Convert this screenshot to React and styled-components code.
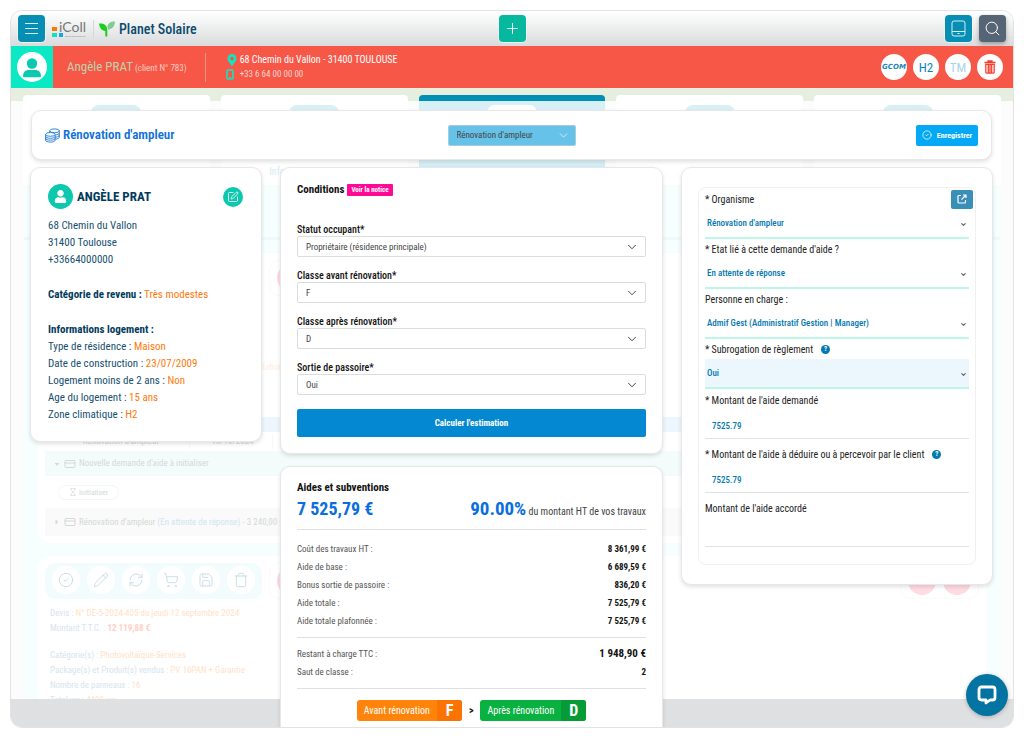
import React from "react";
import styled, { createGlobalStyle, css } from "styled-components";
import {
  CircleCheck,
  Pencil,
  RefreshCw,
  ShoppingCart,
  Save,
  Trash,
  Search,
  Plus,
  ChevronDown,
  SquarePen,
  CreditCard,
  Hourglass,
} from "lucide-react";
import { FaUser, FaMapMarkerAlt, FaCaretDown, FaCaretRight } from "react-icons/fa";

const GlobalStyle = createGlobalStyle`
  *, *::before, *::after { box-sizing: border-box; }
  body { margin: 0; background: #fff; }
  body, button, input, select {
    font-family: "Roboto Condensed", "Liberation Sans Narrow", Roboto, sans-serif;
  }
  button, input, select { margin: 0; }
  h1, h2, h3, p { margin: 0; }
`;

/* ---------- shell ---------- */

const Frame = styled.div`
  position: relative;
  display: flex;
  flex-direction: column;
  height: calc(100vh - 20px);
  margin: 10px;
  border: 1px solid #e2e2e2;
  border-radius: 12px;
  overflow: hidden;
`;

const TopBar = styled.header`
  display: grid;
  grid-template-columns: 1fr auto 1fr;
  align-items: center;
  flex: none;
  height: 35px;
  padding: 0 7px;
  background: linear-gradient(#fff, #f2f3f3 35%, #d9dadb);
`;

const BarGroup = styled.div`
  display: flex;
  align-items: center;
  justify-content: ${(p) => (p.$end ? "flex-end" : "flex-start")};
  gap: 7px;
`;

const SquareButton = styled.button`
  display: grid;
  place-items: center;
  width: 27px;
  height: 27px;
  padding: 0;
  border: 0;
  border-radius: 4px;
  color: #fff;
  background: ${(p) => p.$bg};
  box-shadow: ${(p) => (p.$raised ? "0 2px 4px rgba(0,0,0,.3)" : "0 0 0 1px rgba(255,255,255,.5)")};
`;

const Brand = styled.div`
  display: flex;
  align-items: center;
  gap: 4px;
  padding-left: 5px;
  border-left: 1px solid #d5d8da;
  height: 18px;
  color: #0b4a6c;
  font-size: 14px;
  line-height: 20px;
  font-weight: 500;
  white-space: nowrap;
`;

const LogoText = styled.span`
  align-self: start;
  color: #777;
  font-family: Lato, sans-serif;
  font-size: 14px;
  line-height: 15px;
`;

const Logo = styled.div`
  display: grid;
  grid-template-columns: 7px auto;
  align-items: center;
  height: 20px;
`;

/* ---------- client bar ---------- */

const ClientBar = styled.section`
  display: flex;
  align-items: center;
  flex: none;
  height: 42px;
  padding-right: 10px;
  background: #f65747;
  color: #fff;
`;

const AvatarTile = styled.div`
  display: grid;
  place-items: center;
  width: 42px;
  height: 42px;
  margin-right: 14px;
  background: #0be8c4;
`;

const ClientName = styled.div`
  padding-right: 18px;
  border-right: 1px solid #e59a80;
  color: #f5cfc2;
  font-size: 9px;
  line-height: 28px;
  white-space: nowrap;

  strong {
    color: #bfd2ae;
    font-size: 13px;
    font-weight: 400;
  }
`;

const Contact = styled.address`
  display: grid;
  grid-template-columns: 10px auto;
  column-gap: 4px;
  align-items: center;
  margin-left: 20px;
  font-style: normal;
  font-size: 10px;
  line-height: 15px;
  white-space: nowrap;

  small { font-size: 9px; color: #fbd5cf; }
`;

const RoundBadge = styled.button`
  display: grid;
  place-items: center;
  width: 26px;
  height: 26px;
  padding: 0;
  border: 0;
  border-radius: 50%;
  background: #fff;
  color: ${(p) => p.$color};
  font-size: 13px;
`;

const BadgeRow = styled.div`
  display: flex;
  gap: 6px;
  margin-left: auto;
`;

/* ---------- faded page behind the dialog ---------- */

const Stage = styled.main`
  display: grid;
  grid-template: minmax(0, 1fr) / minmax(0, 1fr);
  flex: 1;
  min-height: 0;
`;

const layer = css`
  grid-area: 1 / 1;
  min-height: 0;
  overflow: hidden;
`;

const Backdrop = styled.div`
  ${layer}
  display: flex;
  flex-direction: column;
  background: #fcfcfc;
`;

const BackdropPage = styled.div`
  flex: 1;
  min-height: 0;
  overflow: hidden;
`;

const BackdropFooter = styled.div`
  flex: none;
  height: 28px;
  background: #dfe0e2;
`;

const Steps = styled.div`
  display: grid;
  grid-template-columns: repeat(5, 1fr);
  gap: 11px;
  padding: 7px 12px 0;
  background: linear-gradient(#e6eee0 13px, transparent 13px);
`;

const Step = styled.div`
  display: flex;
  flex-direction: column;
  align-items: center;
  height: 90px;
  padding-top: ${(p) => (p.$active ? 4 : 10)}px;
  border-top: ${(p) => (p.$active ? "6px solid #0090b5" : "0")};
  border-radius: 4px 4px 0 0;
  background: ${(p) => (p.$active ? "linear-gradient(#d8f0f5 60px, #d0eaf6 72px)" : "#fff")};
  color: #d5ebf3;
  font-size: 10px;
  white-space: nowrap;
`;

const StepPill = styled.span`
  width: 50px;
  height: 20px;
  margin-bottom: 41px;
  border-radius: 8px;
  background: ${(p) => (p.$active ? "#fff" : "#d8f0f4")};
`;

const Sheet = styled.div`
  display: flex;
  flex-direction: column;
  gap: 13px;
  margin: 0 13px;
  padding: 0 14px;
  background: #f7fefe;
`;

const SheetTop = styled.div`
  height: 55px;
  margin: 0 -14px;
  border-bottom: 3px solid #eef9fb;
`;

const GhostCard = styled.section`
  height: ${(p) => p.$height}px;
  padding: 7px;
  border-radius: 12px;
  background: #fff;
  color: #d6e5ee;
  font-size: 9px;
  line-height: 15px;
`;

const GhostBar = styled.div`
  display: flex;
  gap: 7px;
`;

const GhostTools = styled.div`
  display: flex;
  gap: 7px;
  padding: 3px 7px;
  border-radius: 10px;
  background: ${(p) => (p.$plain ? "#fff" : "#f2fcfc")};
  border: ${(p) => (p.$plain ? "1px solid #fafafa" : "0")};
  margin-left: ${(p) => (p.$push ? "auto" : "0")};
`;

const GhostIcon = styled.span`
  display: grid;
  place-items: center;
  width: 28px;
  height: 28px;
  border-radius: 50%;
  background: ${(p) => (p.$pink ? "#ffdbe2" : "#fff")};
  color: #cbdee7;
`;

const GhostText = styled.div`
  padding: ${(p) => p.$top || 0}px 5px 0;
  white-space: nowrap;

  em { color: #ffe2c8; font-style: normal; }
  b { color: #ffcfc4; }
`;

const GhostAside = styled.div`
  height: 121px;
  padding: 64px 0 0 198px;
  color: #ffeee0;
`;

const GhostHead = styled.div`
  height: 15px;
  background: #ecf6fc;
`;

const GhostRow = styled.div`
  display: flex;
  align-items: center;
  gap: 3px;
  height: ${(p) => p.$height}px;
  padding-left: ${(p) => p.$indent || 8}px;
  background: ${(p) => p.$bg || "#fff"};
  color: #d3d8d8;
  white-space: nowrap;

  em { color: #cfe5f0; font-style: normal; }
`;

const GhostCell = styled.span`
  width: ${(p) => p.$width}px;
  text-align: center;
  border-right: 1px solid #f4f8f8;
`;

const GhostPill = styled.span`
  display: flex;
  align-items: center;
  gap: 2px;
  padding: 0 10px;
  border: 1px solid #f3f5f5;
  border-radius: 8px;
  font-size: 8px;
  line-height: 13px;
`;

/* ---------- dialog ---------- */

const Dialog = styled.div`
  ${layer}
  position: relative;
  display: flex;
  flex-direction: column;
  gap: 7px;
  padding: 22px 20px 0 19px;
`;

const Card = styled.section`
  padding: ${(p) => p.$pad};
  border: 1px solid #e6e7e8;
  border-radius: 10px;
  background: #fff;
  box-shadow: 0 2px 4px rgba(0, 0, 0, 0.12);
`;

const TitleCard = styled(Card)`
  display: grid;
  grid-template-columns: 1fr 128px 1fr;
  align-items: center;
  flex: none;
  height: 50px;
  margin: 0 1px;
  padding: 0 13px;
`;

const Title = styled.h1`
  display: flex;
  align-items: center;
  gap: 3px;
  color: #1070dc;
  font-size: 13px;
  line-height: 18px;
  font-weight: 600;
`;

const SaveButton = styled.button`
  display: flex;
  align-items: center;
  justify-content: center;
  justify-self: end;
  gap: 5px;
  width: 62px;
  height: 21px;
  padding: 0;
  border: 0;
  border-radius: 2px;
  background: #03a9f4;
  color: #fff;
  font-size: 8px;
  font-weight: 700;
`;

const Columns = styled.div`
  display: grid;
  grid-template-columns: 232fr 383fr 312fr;
  gap: 18px;
  align-items: start;
`;

const Stack = styled.div`
  display: flex;
  flex-direction: column;
  gap: 12px;
`;

const SelectBox = styled.div`
  display: grid;
  align-items: center;

  > * { grid-area: 1 / 1; }
  > svg { justify-self: end; margin-right: ${(p) => p.$inset}px; pointer-events: none; color: ${(p) => p.$icon || "#444"}; }
`;

const BoxedSelect = styled.select`
  appearance: none;
  width: 100%;
  height: 21px;
  padding: 0 8px;
  border: 1px solid ${(p) => (p.$tinted ? "#a5cbdd" : "#dcdcdc")};
  border-radius: 2px;
  background: ${(p) => (p.$tinted ? "#66c2e9" : "#fff")};
  color: #444;
  font-size: 9px;
`;

/* left card */

const PersonHead = styled.div`
  display: flex;
  align-items: center;
  gap: 4px;
  height: 25px;
  margin-bottom: 8px;
  color: #023a5c;

  h2 { font-size: 13px; line-height: 18px; font-weight: 700; }
`;

const TealCircle = styled.span`
  display: grid;
  place-items: center;
  width: 25px;
  height: 25px;
  border-radius: 50%;
  background: #0bc8ae;
  color: #fff;
`;

const EditButton = styled.button`
  display: grid;
  place-items: center;
  width: 20px;
  height: 20px;
  margin-left: auto;
  padding: 0;
  border: 0;
  border-radius: 50%;
  background: #0bc8ae;
  color: #fff;
`;

const InfoGroup = styled.div`
  margin-top: ${(p) => (p.$spaced ? 18 : 0)}px;
  color: #17506f;
  font-size: 11px;
  line-height: 17px;
  white-space: nowrap;

  b { color: #023a5c; }
  em { color: #ff7a0c; font-style: normal; }
`;

/* middle cards */

const SectionTitle = styled.h2`
  display: flex;
  align-items: center;
  gap: 3px;
  color: #111;
  font-size: 11px;
  line-height: 16px;
  font-weight: 700;
`;

const NoticeLink = styled.a`
  padding: 0 4px;
  border-radius: 1px;
  background: #ff0a96;
  color: #fff;
  font-size: 7px;
  line-height: 12px;
  text-decoration: none;
`;

const ConditionForm = styled.form`
  display: flex;
  flex-direction: column;
  gap: 12px;
  padding-top: 25px;
`;

const ConditionField = styled.div`
  label {
    display: block;
    color: #111;
    font-size: 10px;
    line-height: 13px;
    font-weight: 500;
  }
`;

const PrimaryButton = styled.button`
  height: 28px;
  margin-top: 2px;
  border: 0;
  border-radius: 2px;
  background: #0388d1;
  color: #fff;
  font-size: 9px;
  font-weight: 700;
`;

const Headline = styled.div`
  display: flex;
  align-items: baseline;
  justify-content: space-between;
  height: 34px;
  border-bottom: 1px solid #e0e0e0;
  color: #444;
  font-size: 10px;
  line-height: 26px;

  strong { color: #0b6ee0; font-size: 19px; }
  > strong { font-size: 18px; }
`;

const Figures = styled.table`
  width: 100%;
  border-collapse: collapse;
  color: #555;
  font-size: 9px;
  line-height: 18px;

  th, td { padding: 0; text-align: left; font-weight: 400; }
  td { color: #111; text-align: right; font-weight: 700; }
`;

const FigureBlock = styled.div`
  padding: ${(p) => p.$top}px 0 7px;
  border-bottom: 1px solid #e0e0e0;
`;

const Larger = styled.span`
  font-size: 11px;
`;

const GradeRow = styled.div`
  display: flex;
  align-items: center;
  justify-content: center;
  gap: 7px;
  padding: 11px 0 30px;
  color: #111;
  font-size: 10px;
  font-weight: 700;
`;

const Grade = styled.span`
  display: flex;
  height: 21px;
  border-radius: 3px;
  overflow: hidden;
  background: ${(p) => p.$bg};
  color: #fff;
  font-size: 10px;
  line-height: 21px;
  font-weight: 400;

  > span { padding: 0 7px; }
  > b { width: 25px; background: ${(p) => p.$dark}; font-size: 16px; text-align: center; }
`;

/* right card */

const AidForm = styled.form`
  padding: 1px 6px 13px;
  border: 1px solid #f0f0f0;
  border-radius: 8px;
`;

const AidLabel = styled.div`
  display: flex;
  align-items: center;
  justify-content: space-between;
  height: ${(p) => p.$height}px;
  color: #222;
  font-size: 10px;
  white-space: nowrap;
`;

const LabelGroup = styled.span`
  display: flex;
  align-items: center;
  gap: 8px;
`;

const Help = styled.button`
  width: 9px;
  height: 9px;
  padding: 0;
  border: 0;
  border-radius: 50%;
  background: #0478b0;
  color: #fff;
  font-size: 7px;
  line-height: 9px;
  font-weight: 700;
`;

const OpenButton = styled.button`
  display: grid;
  place-items: center;
  width: 22px;
  height: 19px;
  margin-right: -4px;
  padding: 0;
  border: 0;
  border-radius: 2px;
  background: #3a8fb9;
  color: #fff;
`;

const LineSelect = styled.select`
  appearance: none;
  width: 100%;
  height: 30px;
  padding: 0 2px;
  border: 0;
  border-bottom: 2px solid #bdf5e6;
  border-radius: 0;
  background: ${(p) => (p.$filled ? "#ebf7fc" : "#fff")};
  color: #0478b0;
  font-size: 9px;
  font-weight: 500;
`;

const LineInput = styled.input`
  display: block;
  width: 100%;
  height: 28px;
  margin-bottom: 4px;
  padding: 2px 7px 0;
  border: 0;
  border-bottom: 1px solid #e2e2e2;
  background: none;
  color: #0478b0;
  font-size: 9px;
  font-weight: 500;
`;

const ChatButton = styled.button`
  position: absolute;
  right: 5px;
  bottom: 11px;
  display: grid;
  place-items: center;
  width: 42px;
  height: 42px;
  padding: 0;
  border: 0;
  border-radius: 50%;
  background: #0373a1;
  color: #fff;
  box-shadow: 0 1px 4px rgba(0, 0, 0, 0.25);
`;

/* ---------- drawings ---------- */

const MenuIcon = () => (
  <svg width="15" height="13" viewBox="0 0 15 13" stroke="#d8f1f8" strokeWidth="1">
    <path d="M1 1.5h13M1 6.5h13M1 11.5h13" />
  </svg>
);

const LogoMark = () => (
  <svg width="12" height="20" viewBox="0 0 12 20" overflow="visible">
    <rect x="0" y="8" width="5" height="4" fill="#f77b0b" />
    <rect x="0" y="14" width="5" height="4" fill="#14e0c8" />
    <rect x="7" y="14" width="4" height="4" fill="#1da0f0" />
    <path d="M13 17.500h21" stroke="#bdbdbd" strokeDasharray="3 .5" />
  </svg>
);

const Sprout = () => (
  <svg width="16" height="16" viewBox="0 0 16 16">
    <path d="M0 2.500C4.500 2 7.800 4 8.300 8V15.500H6.300V10C2.800 9.600.500 7 0 2.500z" fill="#1dcf1d" />
    <path d="M16 .500c-4.400-.2-7 1.500-7.700 5.100.6.900.9 1.800 1 3C13.400 8.100 15.700 5.300 16 .5z" fill="#7fce8e" />
  </svg>
);

const TabletIcon = () => (
  <svg width="15" height="17" viewBox="0 0 15 17" fill="none" stroke="#d3f0f8" strokeWidth="1">
    <rect x="1" y="1" width="13" height="15" rx="2" />
    <path d="M1 11.500h13M6.500 13.500h2" />
  </svg>
);

const Person = ({ size }) => (
  <svg width={size} height={size} viewBox="0 0 30 30">
    <circle cx="15" cy="15" r="15" fill="#fff" />
    <circle cx="15" cy="11.500" r="5.200" fill="#0bc9b0" />
    <path d="M6 24.500c0-4.500 2.500-6.500 5.500-6.500h7c3 0 5.500 2 5.500 6.500-.3.500-.8.800-1.500.8h-15c-.7 0-1.200-.3-1.500-.8z" fill="#0bc9b0" />
  </svg>
);

const PhoneIcon = () => (
  <svg width="8" height="11" viewBox="0 0 8 11">
    <rect x="1" y="1" width="6" height="9" rx="1" fill="none" stroke="#0be8c4" strokeWidth="1.500" />
    <path d="M3 8.500h2" stroke="#0be8c4" />
  </svg>
);

const BinIcon = () => (
  <svg width="12" height="14" viewBox="0 0 12 14" fill="none" stroke="currentColor" strokeWidth="1.300">
    <path d="M.5 2.500h11M4 2.500V1h4v1.500M1.800 4.300h8.400v7.900a1 1 0 0 1-1 1H2.800a1 1 0 0 1-1-1zM4.300 5v7.500M6 5v7.500M7.700 5v7.500" />
  </svg>
);

const Coins = () => (
  <svg width="15" height="15" viewBox="0 0 15 15" fill="none" stroke="#1e78d8" strokeWidth=".9">
    <ellipse cx="9.500" cy="2.800" rx="4.800" ry="1.900" />
    <path d="M14.300 2.800v6.400c0 .9-1.500 1.700-3.600 1.900M14.300 5c0 1-1.500 1.700-3.500 1.900M14.300 7.200c0 1-1.500 1.700-3.500 1.900M4.700 2.800v1.600" />
    <ellipse cx="5.400" cy="6.400" rx="4.800" ry="1.900" />
    <path d="M.6 6.400v5.800c0 1 2.100 1.900 4.800 1.900s4.800-.9 4.800-1.900V6.400M.6 8.400c0 1 2.100 1.900 4.800 1.900s4.800-.9 4.800-1.900M.6 10.300c0 1 2.100 1.900 4.800 1.900s4.800-.9 4.800-1.900" />
  </svg>
);

const OpenIcon = () => (
  <svg width="10" height="10" viewBox="0 0 10 10" fill="none" stroke="currentColor" strokeWidth="1.200">
    <path d="M4 1.500H2a1 1 0 0 0-1 1V8a1 1 0 0 0 1 1h5.500a1 1 0 0 0 1-1V6M6 1h3v3M9 1 4.500 5.500" />
  </svg>
);

const Bubble = () => (
  <svg width="20" height="20" viewBox="0 0 20 20" fill="none" stroke="#fff" strokeWidth="2.800" strokeLinejoin="round">
    <path d="M4.500 2h11Q18 2 18 4.500v8q0 2.500-2.500 2.500H13l-4 3v-3H4.500Q2 15 2 12.500v-8Q2 2 4.500 2z" />
  </svg>
);

const Partner = styled.span`
  color: #2585b8;
  font-family: "DejaVu Sans", sans-serif;
  font-size: 7px;
  line-height: 8px;
  font-weight: 700;
  font-style: italic;
`;

/* ---------- parts ---------- */

const Choice = ({ id, label, value }) => (
  <ConditionField>
    <label htmlFor={id}>{label}</label>
    <SelectBox $inset={7}>
      <BoxedSelect id={id} defaultValue={value}>
        <option>{value}</option>
      </BoxedSelect>
      <ChevronDown size={14} strokeWidth={1.7} />
    </SelectBox>
  </ConditionField>
);

const AidChoice = ({ id, label, value, filled, help, action }) => (
  <div>
    <AidLabel $height={20}>
      <LabelGroup>
        <label htmlFor={id}>{label}</label>
        {help && <Help type="button" aria-label="Aide">?</Help>}
      </LabelGroup>
      {action}
    </AidLabel>
    <SelectBox $inset={2} $icon="#666">
      <LineSelect id={id} $filled={filled} defaultValue={value}>
        <option>{value}</option>
      </LineSelect>
      <ChevronDown size={7} strokeWidth={4} />
    </SelectBox>
  </div>
);

const AidAmount = ({ id, label, value, help }) => (
  <div>
    <AidLabel $height={22}>
      <LabelGroup>
        <label htmlFor={id}>{label}</label>
        {help && <Help type="button" aria-label="Aide">?</Help>}
      </LabelGroup>
    </AidLabel>
    <LineInput id={id} type="text" defaultValue={value} />
  </div>
);

const GhostToolbar = () => (
  <GhostBar>
    <GhostTools>
      {[CircleCheck, Pencil, RefreshCw, ShoppingCart, Save, Trash].map((Icon, i) => (
        <GhostIcon key={i}>
          <Icon size={16} strokeWidth={1.5} />
        </GhostIcon>
      ))}
    </GhostTools>
    <GhostTools $plain>
      <GhostIcon $pink />
    </GhostTools>
    <GhostTools $plain $push>
      <GhostIcon $pink />
      <GhostIcon $pink />
    </GhostTools>
  </GhostBar>
);

const figures = [
  ["Coût des travaux HT :", "8 361,99 €"],
  ["Aide de base :", "6 689,59 €"],
  ["Bonus sortie de passoire :", "836,20 €"],
  ["Aide totale :", "7 525,79 €"],
  ["Aide totale plafonnée :", "7 525,79 €"],
];

const housing = [
  ["Type de résidence :", "Maison"],
  ["Date de construction :", "23/07/2009"],
  ["Logement moins de 2 ans :", "Non"],
  ["Age du logement :", "15 ans"],
  ["Zone climatique :", "H2"],
];

export default function App() {
  return (
    <>
      <GlobalStyle />
      <Frame>
        <TopBar>
          <BarGroup>
            <SquareButton $bg="#078eb5" aria-label="Menu"><MenuIcon /></SquareButton>
            <Logo>
              <LogoMark />
              <LogoText>iColl</LogoText>
            </Logo>
            <Brand><Sprout />Planet Solaire</Brand>
          </BarGroup>
          <SquareButton $bg="#06b89e" aria-label="Ajouter"><Plus size={17} strokeWidth={1.3} /></SquareButton>
          <BarGroup $end>
            <SquareButton $bg="#078eb5" aria-label="Tablette"><TabletIcon /></SquareButton>
            <SquareButton $bg="#556575" $raised aria-label="Rechercher"><Search size={17} strokeWidth={1.4} /></SquareButton>
          </BarGroup>
        </TopBar>

        <ClientBar>
          <AvatarTile><Person size={30} /></AvatarTile>
          <ClientName><strong>Angèle PRAT</strong> (client N° 783)</ClientName>
          <Contact>
            <FaMapMarkerAlt size={12} color="#0be8c4" />
            <span>68 Chemin du Vallon - 31400 TOULOUSE</span>
            <PhoneIcon />
            <small>+33 6 64 00 00 00</small>
          </Contact>
          <BadgeRow>
            <RoundBadge aria-label="GCOM"><Partner>GCOM</Partner></RoundBadge>
            <RoundBadge $color="#0a87ad">H2</RoundBadge>
            <RoundBadge $color="#a8d4ea">TM</RoundBadge>
            <RoundBadge $color="#f4402f" aria-label="Supprimer"><BinIcon /></RoundBadge>
          </BadgeRow>
        </ClientBar>

        <Stage>
          <Backdrop aria-hidden="true">
            <BackdropPage>
              <Steps>
                <Step><StepPill /></Step>
                <Step><StepPill />Informations logement</Step>
                <Step $active><StepPill $active /></Step>
                <Step><StepPill /></Step>
                <Step><StepPill /></Step>
              </Steps>
              <Sheet>
                <SheetTop />
                <GhostCard $height={290}>
                  <GhostToolbar />
                  <GhostAside>Installation e</GhostAside>
                  <GhostHead />
                  <GhostRow $height={19} $indent={0}>
                    <GhostCell $width={137}>Rénovation d'ampleur</GhostCell>
                    <GhostCell $width={80}>10/10/2024</GhostCell>
                  </GhostRow>
                  <GhostRow $height={25} $bg="#f3fcfb">
                    <FaCaretDown size={8} /><CreditCard size={12} />Nouvelle demande d'aide à initialiser
                  </GhostRow>
                  <GhostRow $height={32} $indent={13}>
                    <GhostPill><Hourglass size={8} />Initialiser</GhostPill>
                  </GhostRow>
                  <GhostRow $height={28} $bg="#fafafa">
                    <FaCaretRight size={8} /><CreditCard size={12} />
                    <span>Rénovation d'ampleur <em>(En attente de réponse)</em> - 3 240,00 €</span>
                  </GhostRow>
                </GhostCard>
                <GhostCard $height={200}>
                  <GhostToolbar />
                  <GhostText $top={7}>
                    Devis : <em>N° DE-5-2024-405 du jeudi 12 septembre 2024</em><br />
                    Montant T.T.C. : <b>12 119,88 €</b>
                  </GhostText>
                  <GhostText $top={12}>
                    Catégorie(s) : <em>Photovoltaïque-Services</em><br />
                    Package(s) et Produit(s) vendus : <em>PV 16PAN + Garantie</em><br />
                    Nombre de panneaux : <em>16</em><br />
                    Total wc : <em>4400 wc</em>
                  </GhostText>
                </GhostCard>
              </Sheet>
            </BackdropPage>
            <BackdropFooter />
          </Backdrop>

          <Dialog>
            <TitleCard>
              <Title><Coins />Rénovation d'ampleur</Title>
              <SelectBox $inset={6} $icon="#d5f0fb">
                <BoxedSelect $tinted aria-label="Type d'aide" defaultValue="Rénovation d'ampleur">
                  <option>Rénovation d'ampleur</option>
                </BoxedSelect>
                <ChevronDown size={13} strokeWidth={1.7} />
              </SelectBox>
              <SaveButton type="button"><CircleCheck size={10} strokeWidth={1.8} />Enregistrer</SaveButton>
            </TitleCard>

            <Columns>
              <Card $pad="16px 18px 18px 17px">
                <PersonHead>
                  <TealCircle><FaUser size={13} /></TealCircle>
                  <h2>ANGÈLE PRAT</h2>
                  <EditButton aria-label="Modifier"><SquarePen size={12} strokeWidth={1.7} /></EditButton>
                </PersonHead>
                <InfoGroup>
                  68 Chemin du Vallon<br />31400 Toulouse<br />+33664000000
                </InfoGroup>
                <InfoGroup $spaced><b>Catégorie de revenu :</b> <em>Très modestes</em></InfoGroup>
                <InfoGroup $spaced>
                  <b>Informations logement :</b>
                  {housing.map(([k, v]) => (
                    <div key={k}>{k} <em>{v}</em></div>
                  ))}
                </InfoGroup>
              </Card>

              <Stack>
                <Card $pad="14px 16px 16px">
                  <SectionTitle>Conditions <NoticeLink href="#notice">Voir la notice</NoticeLink></SectionTitle>
                  <ConditionForm>
                    <Choice id="statut" label="Statut occupant*" value="Propriétaire (résidence principale)" />
                    <Choice id="avant" label="Classe avant rénovation*" value="F" />
                    <Choice id="apres" label="Classe après rénovation*" value="D" />
                    <Choice id="sortie" label="Sortie de passoire*" value="Oui" />
                    <PrimaryButton type="button">Calculer l'estimation</PrimaryButton>
                  </ConditionForm>
                </Card>

                <Card $pad="13px 16px 0">
                  <SectionTitle>Aides et subventions</SectionTitle>
                  <Headline>
                    <strong>7 525,79 €</strong>
                    <span><strong>90.00%</strong> du montant HT de vos travaux</span>
                  </Headline>
                  <FigureBlock $top={10}>
                    <Figures>
                      <tbody>
                        {figures.map(([k, v]) => (
                          <tr key={k}><th scope="row">{k}</th><td>{v}</td></tr>
                        ))}
                      </tbody>
                    </Figures>
                  </FigureBlock>
                  <FigureBlock $top={7}>
                    <Figures>
                      <tbody>
                        <tr><th scope="row">Restant à charge TTC :</th><td><Larger>1 948,90 €</Larger></td></tr>
                        <tr><th scope="row">Saut de classe :</th><td>2</td></tr>
                      </tbody>
                    </Figures>
                  </FigureBlock>
                  <GradeRow>
                    <Grade $bg="#ff8409" $dark="#fb7303"><span>Avant rénovation</span><b>F</b></Grade>
                    &gt;
                    <Grade $bg="#08b140" $dark="#069b36"><span>Après rénovation</span><b>D</b></Grade>
                  </GradeRow>
                </Card>
              </Stack>

              <Card $pad="19px 16px 19px">
                <AidForm>
                  <AidChoice
                    id="organisme"
                    label="* Organisme"
                    value="Rénovation d'ampleur"
                    action={<OpenButton type="button" aria-label="Ouvrir"><OpenIcon /></OpenButton>}
                  />
                  <AidChoice id="etat" label="* Etat lié à cette demande d'aide ?" value="En attente de réponse" />
                  <AidChoice id="personne" label="Personne en charge :" value="Admif Gest (Administratif Gestion | Manager)" />
                  <AidChoice id="subrogation" label="* Subrogation de règlement" value="Oui" filled help />
                  <AidAmount id="demande" label="* Montant de l'aide demandé" value="7525.79" />
                  <AidAmount id="deduire" label="* Montant de l'aide à déduire ou à percevoir par le client" value="7525.79" help />
                  <AidAmount id="accorde" label="Montant de l'aide accordé" value="" />
                </AidForm>
              </Card>
            </Columns>
          </Dialog>
        </Stage>
        <ChatButton aria-label="Discussion"><Bubble /></ChatButton>
      </Frame>
    </>
  );
}
